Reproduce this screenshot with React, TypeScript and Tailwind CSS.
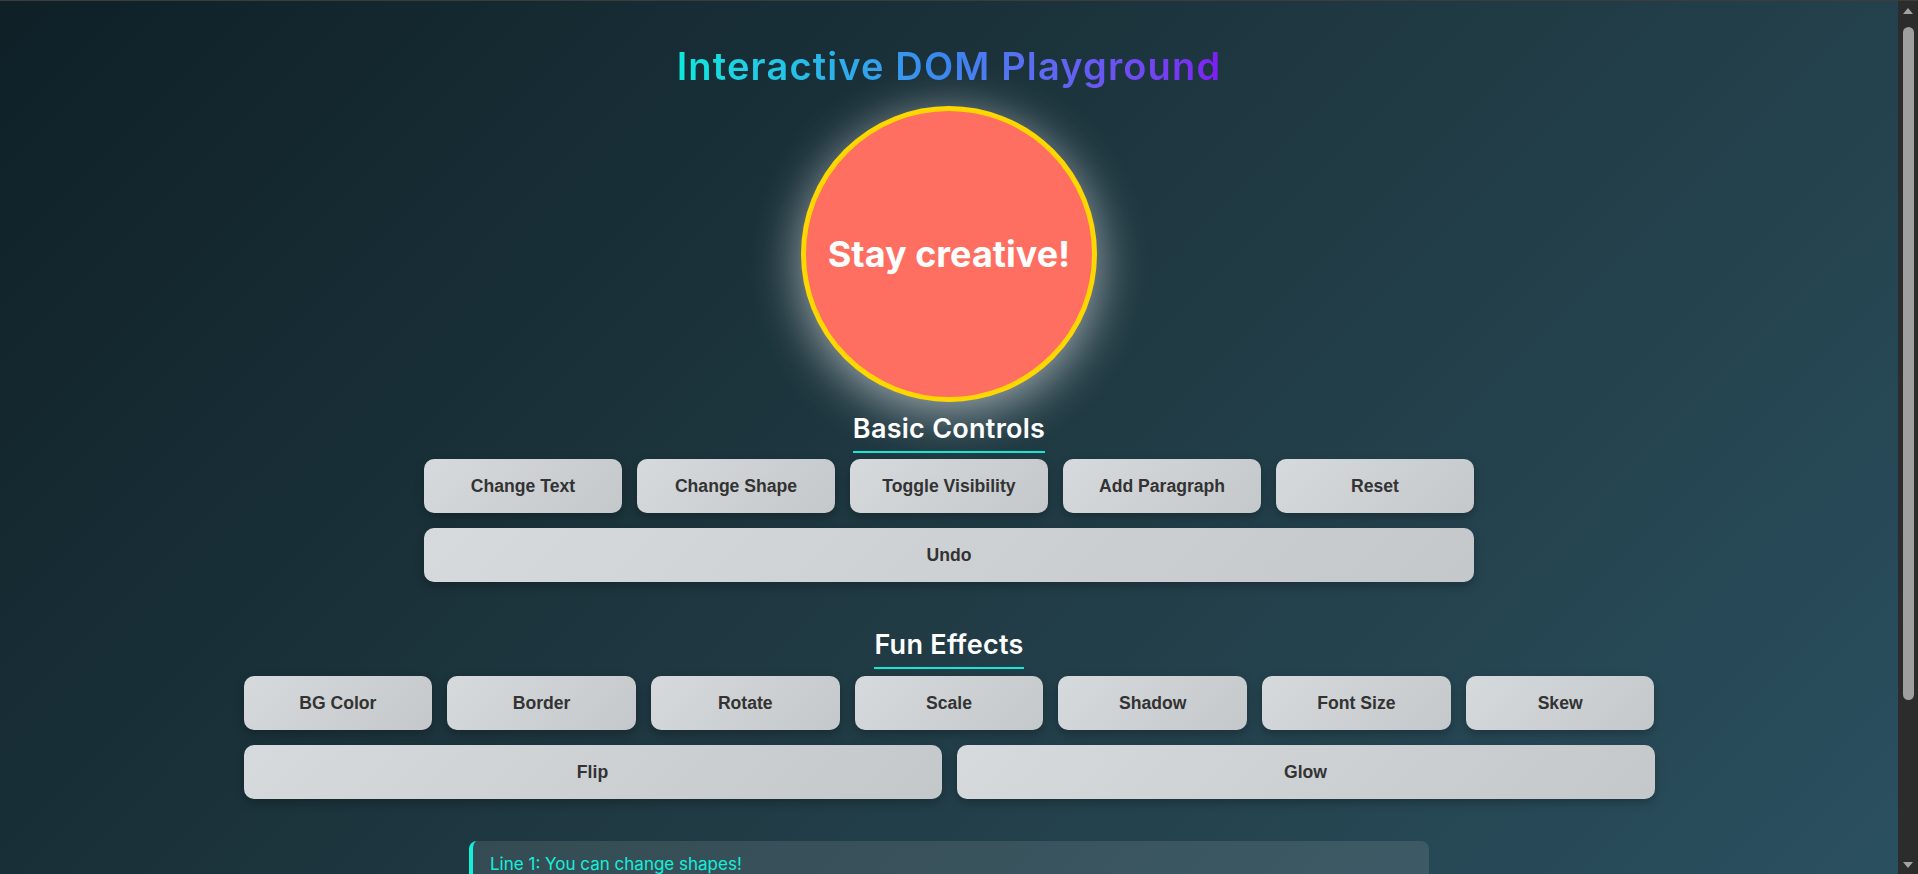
import { FC } from 'react';

const basicControls = ['Change Text', 'Change Shape', 'Toggle Visibility', 'Add Paragraph', 'Reset'];
const funEffects = ['BG Color', 'Border', 'Rotate', 'Scale', 'Shadow', 'Font Size', 'Skew'];
const lines = ['Line 1: You can change shapes!', 'Line 2: Try out the fun effects!', 'Line 3: Undo whenever you like!'];

const ControlButton: FC<{ label: string; className?: string }> = ({ label, className = '' }) => (
  <button
    className={`h-[54px] rounded-[10px] bg-linear-135 from-[#d6dadc] to-[#c4c8cb] text-[17.6px] font-bold text-[#333]
      font-['Liberation_Sans',Arial,sans-serif] shadow-[0_4px_10px_rgba(0,0,0,0.25)] ${className}`}
  >
    {label}
  </button>
);

const SectionTitle: FC<{ children: string }> = ({ children }) => (
  <h2 className="inline-block border-b-2 border-[#14e8d4] pb-[6px] text-[27px] leading-[32px] font-semibold tracking-[0.01em] text-white">
    {children}
  </h2>
);

// window scrollbar as it shows in the screenshot
const ScrollBar: FC = () => (
  <div className="flex w-[20px] shrink-0 flex-col items-center bg-[#2c2c2c]">
    <svg width="10" height="6" viewBox="0 0 10 6" className="mt-[7px]">
      <path d="M5 0 L10 6 L0 6 Z" fill="#a3a3a3" />
    </svg>
    <div className="mt-[13px] h-[673px] w-[11px] rounded-full bg-[#9f9f9f]" />
    <svg width="10" height="6" viewBox="0 0 10 6" className="mt-auto mb-[6px]">
      <path d="M0 0 L10 0 L5 6 Z" fill="#a3a3a3" />
    </svg>
  </div>
);

export default function App() {
  return (
    <div className="flex h-[874px] border-t border-[#3c3c3c] font-['Inter','Noto_Sans',sans-serif]">
      <div className="flex-1 overflow-hidden">
        <div className="flex flex-col items-center bg-linear-135 from-[#0f2027] via-[#203a43] to-[#2c5364] pt-[42px] pb-[60px]">
          {/* title */}
          <h1 className="w-fit bg-linear-to-r from-[#0be9dc] via-[#3b84f0] to-[#7c1cf3] bg-clip-text text-[38px] leading-[46px] font-semibold tracking-[0.03em] text-transparent">
            Interactive DOM Playground
          </h1>

          {/* circle */}
          <div className="mt-[17px] flex h-[296px] w-[296px] items-center justify-center rounded-full border-[5px] border-[#ffd700] bg-[#ff6f61] shadow-[0_10px_50px_rgba(255,255,255,0.6)]">
            <span className="text-[36px] font-bold text-white">Stay creative!</span>
          </div>

          {/* basic controls */}
          <div className="mt-[11px] flex flex-col items-center">
            <SectionTitle>Basic Controls</SectionTitle>
            <div className="mt-[6px] grid w-[1050px] grid-cols-5 gap-[15px]">
              {basicControls.map((b) => (
                <ControlButton key={b} label={b} />
              ))}
              <ControlButton label="Undo" className="col-span-5" />
            </div>
          </div>

          {/* fun effects */}
          <div className="mt-[47px] flex flex-col items-center">
            <SectionTitle>Fun Effects</SectionTitle>
            <div className="mt-[7px] flex w-[1411px] flex-col gap-[15px]">
              <div className="grid grid-cols-7 gap-[15px]">
                {funEffects.map((b) => (
                  <ControlButton key={b} label={b} />
                ))}
              </div>
              <div className="grid grid-cols-2 gap-[15px]">
                <ControlButton label="Flip" />
                <ControlButton label="Glow" />
              </div>
            </div>
          </div>

          {/* paragraphs */}
          <div className="mt-[42px] flex w-[960px] flex-col gap-[10px]">
            {lines.map((l) => (
              <p
                key={l}
                className="rounded-lg border-l-4 border-[#14f0dc] bg-white/10 pt-[10px] pb-[12px] pl-[17px] text-[17px] leading-[26px] text-[#14f0dc]"
              >
                {l}
              </p>
            ))}
          </div>
        </div>
      </div>
      <ScrollBar />
    </div>
  );
}
